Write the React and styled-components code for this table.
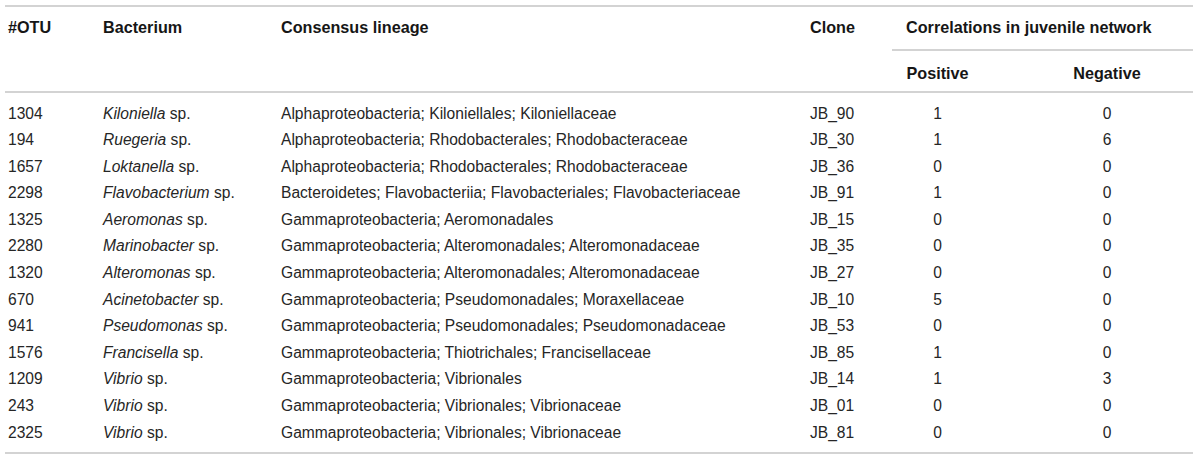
import styled, { createGlobalStyle } from "styled-components"

const GlobalStyle = createGlobalStyle`
body {
  margin: 0;
  background: #fff;
  font-family: "Liberation Sans", Arial, sans-serif;
  color: #262626;
}
`;

const Wrapper = styled.div`
padding: 5px 7px 5px 5px;
`;

const Table = styled.table`
width: 1188px;
table-layout: fixed;
border-collapse: separate;
border-spacing: 0;
border-top: 2px solid #d3d3d3;
border-bottom: 2px solid #d3d3d3;
line-height: 18px;
`;

const HeadCell = styled.th`
font-size: 16.2px;
font-weight: 700;
color: #161616;
text-align: ${(p) => (p.$center ? "center" : "left")};
vertical-align: top;
padding: ${(p) => (p.$sub ? "13px 3px 9px" : "11px 3px 13px")};
padding-left: ${(p) => (p.$pad ? p.$pad : 3)}px;
border-bottom: ${(p) => (p.$line ? "2px solid #d3d3d3" : "none")};
white-space: nowrap;
`;

const Cell = styled.td`
font-size: 15.6px;
text-align: ${(p) => (p.$center ? "center" : "left")};
padding: 4.3px 3px;
padding-left: ${(p) => (p.$pad ? p.$pad : 3)}px;
white-space: nowrap;
tr:first-child > & {
  padding-top: 11.5px;
}
tr:last-child > & {
  padding-bottom: 10.3px;
}
`;

const rows = [
  ["1304", "Kiloniella", "Alphaproteobacteria; Kiloniellales; Kiloniellaceae", "JB_90", 1, 0],
  ["194", "Ruegeria", "Alphaproteobacteria; Rhodobacterales; Rhodobacteraceae", "JB_30", 1, 6],
  ["1657", "Loktanella", "Alphaproteobacteria; Rhodobacterales; Rhodobacteraceae", "JB_36", 0, 0],
  ["2298", "Flavobacterium", "Bacteroidetes; Flavobacteriia; Flavobacteriales; Flavobacteriaceae", "JB_91", 1, 0],
  ["1325", "Aeromonas", "Gammaproteobacteria; Aeromonadales", "JB_15", 0, 0],
  ["2280", "Marinobacter", "Gammaproteobacteria; Alteromonadales; Alteromonadaceae", "JB_35", 0, 0],
  ["1320", "Alteromonas", "Gammaproteobacteria; Alteromonadales; Alteromonadaceae", "JB_27", 0, 0],
  ["670", "Acinetobacter", "Gammaproteobacteria; Pseudomonadales; Moraxellaceae", "JB_10", 5, 0],
  ["941", "Pseudomonas", "Gammaproteobacteria; Pseudomonadales; Pseudomonadaceae", "JB_53", 0, 0],
  ["1576", "Francisella", "Gammaproteobacteria; Thiotrichales; Francisellaceae", "JB_85", 1, 0],
  ["1209", "Vibrio", "Gammaproteobacteria; Vibrionales", "JB_14", 1, 3],
  ["243", "Vibrio", "Gammaproteobacteria; Vibrionales; Vibrionaceae", "JB_01", 0, 0],
  ["2325", "Vibrio", "Gammaproteobacteria; Vibrionales; Vibrionaceae", "JB_81", 0, 0],
];

const App = () => {
  return (
    <Wrapper>
      <GlobalStyle />
      <Table>
        <colgroup>
          <col style={{ width: 95 }} />
          <col style={{ width: 178 }} />
          <col style={{ width: 529 }} />
          <col style={{ width: 85 }} />
          <col style={{ width: 91 }} />
          <col style={{ width: 210 }} />
        </colgroup>
        <thead>
          <tr>
            <HeadCell rowSpan={2} $line>#OTU</HeadCell>
            <HeadCell rowSpan={2} $line>Bacterium</HeadCell>
            <HeadCell rowSpan={2} $line>Consensus lineage</HeadCell>
            <HeadCell rowSpan={2} $line>Clone</HeadCell>
            <HeadCell colSpan={2} $line $pad={14}>Correlations in juvenile network</HeadCell>
          </tr>
          <tr>
            <HeadCell $sub $center $line>Positive</HeadCell>
            <HeadCell $sub $center $line $pad={41}>Negative</HeadCell>
          </tr>
        </thead>
        <tbody>
          {rows.map((r, i) => (
            <tr key={i}>
              <Cell>{r[0]}</Cell>
              <Cell><i>{r[1]}</i> sp.</Cell>
              <Cell>{r[2]}</Cell>
              <Cell>{r[3]}</Cell>
              <Cell $center>{r[4]}</Cell>
              <Cell $center $pad={41}>{r[5]}</Cell>
            </tr>
          ))}
        </tbody>
      </Table>
    </Wrapper>
  )
}

export default App
